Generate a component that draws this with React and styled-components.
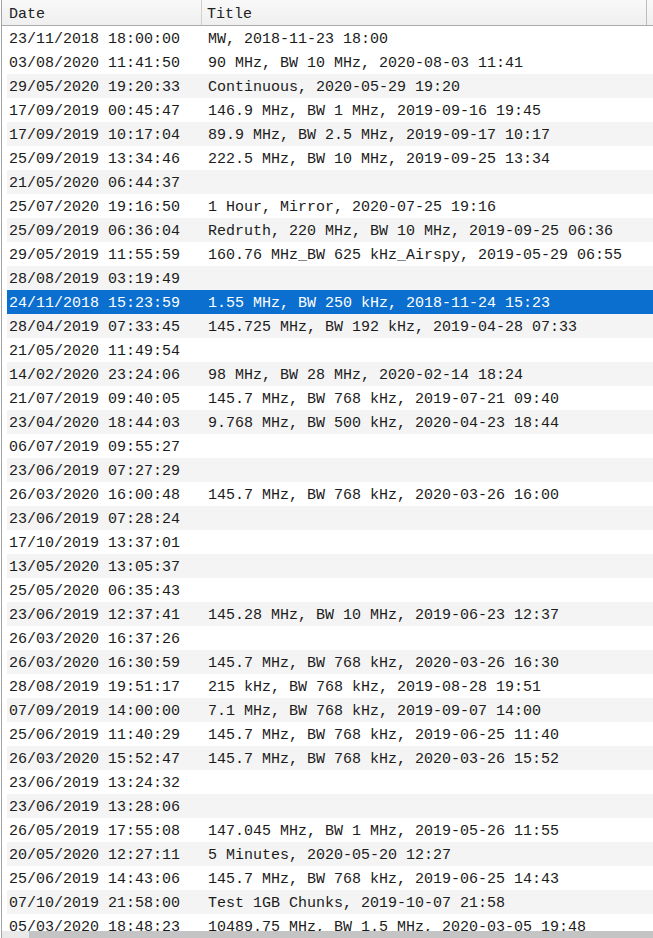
import React from "react";
import styled, { createGlobalStyle } from "styled-components";

const Global = createGlobalStyle`
  html, body { margin: 0; padding: 0; background: #ffffff; }
  body { overflow: hidden; }
  *, *::before, *::after { box-sizing: border-box; }
`;

const recordings = [
  ["23/11/2018 18:00:00", "MW, 2018-11-23 18:00"],
  ["03/08/2020 11:41:50", "90 MHz, BW 10 MHz, 2020-08-03 11:41"],
  ["29/05/2020 19:20:33", "Continuous, 2020-05-29 19:20"],
  ["17/09/2019 00:45:47", "146.9 MHz, BW 1 MHz, 2019-09-16 19:45"],
  ["17/09/2019 10:17:04", "89.9 MHz, BW 2.5 MHz, 2019-09-17 10:17"],
  ["25/09/2019 13:34:46", "222.5 MHz, BW 10 MHz, 2019-09-25 13:34"],
  ["21/05/2020 06:44:37", ""],
  ["25/07/2020 19:16:50", "1 Hour, Mirror, 2020-07-25 19:16"],
  ["25/09/2019 06:36:04", "Redruth, 220 MHz, BW 10 MHz, 2019-09-25 06:36"],
  ["29/05/2019 11:55:59", "160.76 MHz_BW 625 kHz_Airspy, 2019-05-29 06:55"],
  ["28/08/2019 03:19:49", ""],
  ["24/11/2018 15:23:59", "1.55 MHz, BW 250 kHz, 2018-11-24 15:23"],
  ["28/04/2019 07:33:45", "145.725 MHz, BW 192 kHz, 2019-04-28 07:33"],
  ["21/05/2020 11:49:54", ""],
  ["14/02/2020 23:24:06", "98 MHz, BW 28 MHz, 2020-02-14 18:24"],
  ["21/07/2019 09:40:05", "145.7 MHz, BW 768 kHz, 2019-07-21 09:40"],
  ["23/04/2020 18:44:03", "9.768 MHz, BW 500 kHz, 2020-04-23 18:44"],
  ["06/07/2019 09:55:27", ""],
  ["23/06/2019 07:27:29", ""],
  ["26/03/2020 16:00:48", "145.7 MHz, BW 768 kHz, 2020-03-26 16:00"],
  ["23/06/2019 07:28:24", ""],
  ["17/10/2019 13:37:01", ""],
  ["13/05/2020 13:05:37", ""],
  ["25/05/2020 06:35:43", ""],
  ["23/06/2019 12:37:41", "145.28 MHz, BW 10 MHz, 2019-06-23 12:37"],
  ["26/03/2020 16:37:26", ""],
  ["26/03/2020 16:30:59", "145.7 MHz, BW 768 kHz, 2020-03-26 16:30"],
  ["28/08/2019 19:51:17", "215 kHz, BW 768 kHz, 2019-08-28 19:51"],
  ["07/09/2019 14:00:00", "7.1 MHz, BW 768 kHz, 2019-09-07 14:00"],
  ["25/06/2019 11:40:29", "145.7 MHz, BW 768 kHz, 2019-06-25 11:40"],
  ["26/03/2020 15:52:47", "145.7 MHz, BW 768 kHz, 2020-03-26 15:52"],
  ["23/06/2019 13:24:32", ""],
  ["23/06/2019 13:28:06", ""],
  ["26/05/2019 17:55:08", "147.045 MHz, BW 1 MHz, 2019-05-26 11:55"],
  ["20/05/2020 12:27:11", "5 Minutes, 2020-05-20 12:27"],
  ["25/06/2019 14:43:06", "145.7 MHz, BW 768 kHz, 2019-06-25 14:43"],
  ["07/10/2019 21:58:00", "Test 1GB Chunks, 2019-10-07 21:58"],
  ["05/03/2020 18:48:23", "10489.75 MHz, BW 1.5 MHz, 2020-03-05 19:48"],
];

const SELECTED = 11;

const Frame = styled.div`
  height: 100vh;
  margin-left: 1px;
  border-left: 1px solid #a3a3a3;
  display: flex;
  flex-direction: column;
  font-family: "Liberation Mono", "DejaVu Sans Mono", monospace;
  font-size: 15px;
  color: #1b1b1b;
  overflow: hidden;
`;

const Header = styled.div`
  flex: 0 0 26px;
  display: grid;
  grid-template-columns: 200px 1fr 6px;
  background: linear-gradient(#f9f9f9, #efefef);
  border-bottom: 1px solid #ababab;
`;

const HeaderCell = styled.div`
  display: flex;
  align-items: center;
  padding-left: ${(p) => p.$pad || 0}px;
  padding-top: 4px;
  border-right: 1px solid ${(p) => p.$edge || "transparent"};
  color: #222;
  white-space: nowrap;
`;

const Body = styled.div`
  flex: 1;
  overflow: hidden;
  padding-left: 5px;
`;

const Row = styled.div`
  height: 24px;
  padding-top: 3px;
  display: grid;
  grid-template-columns: 201px 1fr;
  align-items: center;
  white-space: nowrap;
  background: ${(p) => (p.$selected ? "#0b6fd0" : p.$shade ? "#f4f4f4" : "#ffffff")};
  color: ${(p) => (p.$selected ? "#ffffff" : "inherit")};
`;

const DateCell = styled.span`
  padding-left: 2px;
`;

const TitleCell = styled.span``;

const ScrollTrack = styled.div`
  flex: 0 0 7px;
  display: flex;
  background: #e9e9e9;
  padding-left: 27px;
`;

const ScrollThumb = styled.div`
  flex: 1;
  background: #c4c4c4;
`;

export default function App() {
  return (
    <>
      <Global />
      <Frame>
        <Header>
          <HeaderCell $pad={7} $edge="#cfcfcf">Date</HeaderCell>
          <HeaderCell $pad={5} $edge="#bdbdbd">Title</HeaderCell>
          <HeaderCell />
        </Header>
        <Body>
          {recordings.map(([date, title], i) => (
            <Row key={date + i} $selected={i === SELECTED} $shade={i > 0 && i % 2 === 0}>
              <DateCell>{date}</DateCell>
              <TitleCell>{title}</TitleCell>
            </Row>
          ))}
        </Body>
        <ScrollTrack>
          <ScrollThumb />
        </ScrollTrack>
      </Frame>
    </>
  );
}
